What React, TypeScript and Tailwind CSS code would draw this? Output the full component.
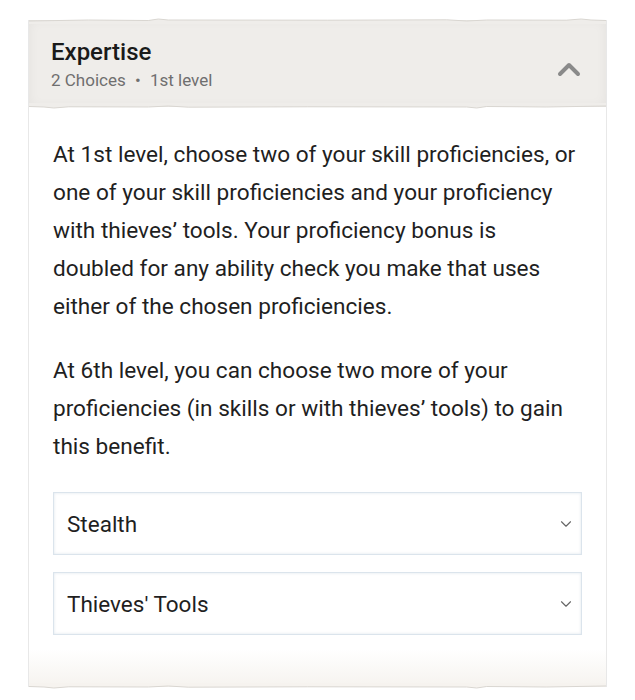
import { ChevronDown } from 'lucide-react';

const font = { fontFamily: 'Roboto, "Noto Sans", sans-serif' };

function TornEdge({ flip, fill = '#efedea' }: { flip?: boolean; fill?: string }) {
  // thin ragged paper edge drawn over the header band
  return (
    <svg
      className={`absolute left-0 w-full h-[8px] ${flip ? 'bottom-[-4px] rotate-180' : 'top-[-4px]'}`}
      viewBox="0 0 580 8"
      preserveAspectRatio="none"
    >
      <path
        d="M0 5 L60 4 L120 4.5 L130 3 L140 4 L300 4.2 L420 3.8 L440 5 L460 4 L540 4.2 L555 3 L565 4 L580 4.5 L580 8 L0 8 Z"
        fill={fill}
      />
      <path
        d="M0 5 L60 4 L120 4.5 L130 3 L140 4 L300 4.2 L420 3.8 L440 5 L460 4 L540 4.2 L555 3 L565 4 L580 4.5"
        fill="none"
        stroke="#d9d6d1"
        strokeWidth="1"
      />
    </svg>
  );
}

function ChoiceSelect({ value }: { value: string }) {
  return (
    <div className="flex items-center justify-between h-[63px] pl-[13px] pr-[6px] bg-white border border-[#dbe4ec] shadow-[inset_0_0_3px_rgba(160,180,200,0.35)]">
      <span className="text-[22.5px] text-[#1f1f1f]">{value}</span>
      <ChevronDown size={18} strokeWidth={1.5} className="text-[#666]" />
    </div>
  );
}

export default function App() {
  return (
    <div className="min-h-screen bg-white pt-[20px] px-[28px]" style={font}>
      <div className="w-[579px] bg-white border-x border-[#e8e8e8]">
        {/* Header */}
        <div className="relative bg-[#efedea] h-[87px] px-[22px] pt-[18px] flex justify-between shadow-[inset_0_0_12px_rgba(0,0,0,0.05)]">
          <TornEdge />
          <div>
            <div className="text-[24px] font-medium leading-[28px] text-[#1a1a1a]">Expertise</div>
            <div className="text-[17px] leading-[22px] text-[#6f6f6f] mt-[3px]">
              2 Choices <span className="mx-[5px]">•</span> 1st level
            </div>
          </div>
          <svg width="26" height="18" viewBox="0 0 26 18" className="mt-[22px] mr-[2px]">
            <path d="M4 14 L13 5 L22 14" fill="none" stroke="#8a8a8a" strokeWidth="4" strokeLinecap="round" strokeLinejoin="round" />
          </svg>
          <TornEdge flip />
        </div>

        {/* Body */}
        <div className="px-[24px] pt-[29px] pb-[14px] text-[22.6px] leading-[38px] text-[#1f1f1f]">
          <p>
            At 1st level, choose two of your skill proficiencies, or one of your skill proficiencies and your proficiency
            with thieves’ tools. Your proficiency bonus is doubled for any ability check you make that uses either of the
            chosen proficiencies.
          </p>
          <p className="mt-[26px]">
            At 6th level, you can choose two more of your proficiencies (in skills or with thieves’ tools) to gain this
            benefit.
          </p>
          <div className="mt-[26px] flex flex-col gap-[17px]">
            <ChoiceSelect value="Stealth" />
            <ChoiceSelect value="Thieves' Tools" />
          </div>
        </div>

        {/* Bottom fade + torn edge */}
        <div className="relative h-[38px] bg-gradient-to-b from-white to-[#f6f3ef]">
          <TornEdge flip fill="#f6f3ef" />
        </div>
      </div>
    </div>
  );
}
